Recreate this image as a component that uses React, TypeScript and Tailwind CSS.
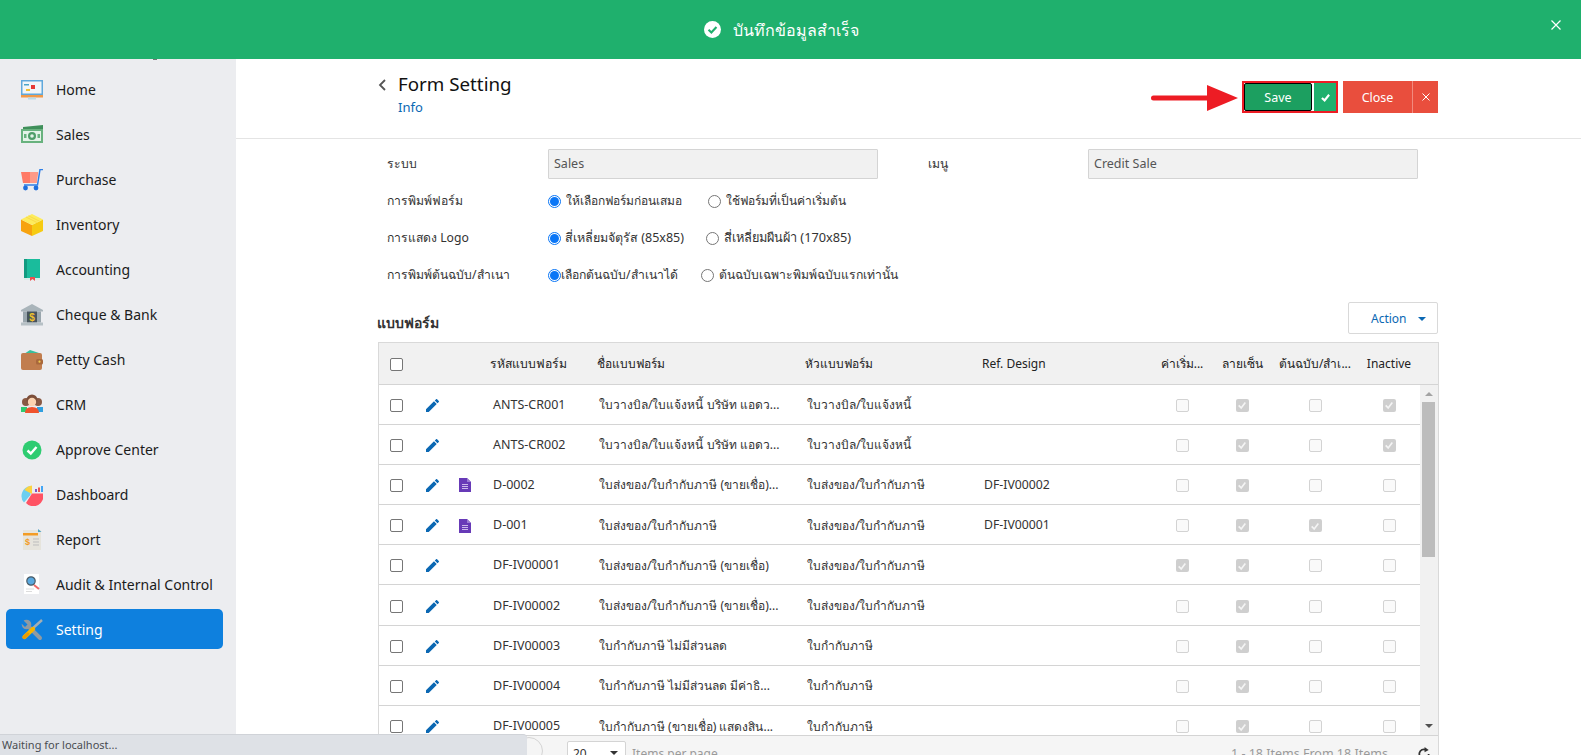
import type { ReactNode } from 'react'

const gridCols = 'grid grid-cols-[47px_33px_33px_106px_207px_177px_168px_64px_56px_90px_58px]'

const menu: { label: string; icon: ReactNode }[] = [
  {
    label: 'Home',
    icon: (
      <svg viewBox="0 0 22 22" className="h-[22px] w-[22px]">
        <rect x="0" y="1" width="22" height="15" fill="#5fa8dc" />
        <rect x="1.5" y="2.5" width="19" height="12" fill="#f1f5f8" />
        <rect x="3" y="5" width="5" height="1.5" fill="#4aa3c8" />
        <rect x="10" y="6" width="4" height="4" fill="#e53935" />
        <rect x="5" y="10" width="4" height="2" fill="#f3c02f" />
        <rect x="0" y="16" width="22" height="2.5" fill="#f09a4a" />
        <rect x="7" y="18.5" width="8" height="2" fill="#b9dbe9" />
      </svg>
    ),
  },
  {
    label: 'Sales',
    icon: (
      <svg viewBox="0 0 22 22" className="h-[22px] w-[22px]">
        <path d="M2 3 L22 1 V6 H2 Z" fill="#3f8f5a" />
        <rect x="0" y="5" width="22" height="14" fill="#68b27e" />
        <rect x="2" y="7" width="18" height="10" fill="#e4f3e8" />
        <circle cx="11" cy="12" r="4" fill="#4f9e69" />
        <circle cx="11" cy="12" r="1.8" fill="#e4f3e8" />
        <rect x="3" y="10" width="2.5" height="4" fill="#68b27e" />
        <rect x="16.5" y="10" width="2.5" height="4" fill="#68b27e" />
      </svg>
    ),
  },
  {
    label: 'Purchase',
    icon: (
      <svg viewBox="0 0 22 22" className="h-[22px] w-[22px]">
        <path d="M0 3 H17 L15.5 14 H2 Z" fill="#ff7a66" />
        <path d="M9 3 H17 L15.5 14 H9 Z" fill="#ff9a88" />
        <path d="M22 0.5 H19 L16.5 16 H3" fill="none" stroke="#2f7fe6" strokeWidth="1.5" />
        <circle cx="4.5" cy="19" r="2.4" fill="#1f6fdc" />
        <circle cx="15" cy="19" r="2.4" fill="#1f6fdc" />
      </svg>
    ),
  },
  {
    label: 'Inventory',
    icon: (
      <svg viewBox="0 0 22 22" className="h-[22px] w-[22px]">
        <path d="M0 5.5 L11 11 V22 L0 17 Z" fill="#f7a30f" />
        <path d="M22 5.5 L11 11 V22 L22 17 Z" fill="#f6cb12" />
        <path d="M0 5.5 L11 0 L22 5.5 L11 11 Z" fill="#fdec5c" />
        <path d="M5 3 L16 8.5 M7.5 1.8 L18.5 7.2" stroke="#f9d94a" strokeWidth="1" />
      </svg>
    ),
  },
  {
    label: 'Accounting',
    icon: (
      <svg viewBox="0 0 22 22" className="h-[22px] w-[22px]">
        <path d="M3 2 Q3 0 5 0 H19 V19 H3 Z" fill="#1abc9c" />
        <rect x="3" y="0" width="3" height="19" fill="#119a80" />
        <rect x="3" y="19" width="16" height="2" fill="#d9ece8" />
        <path d="M9 18 H14 V22 L11.5 20 L9 22 Z" fill="#ee4d4d" />
      </svg>
    ),
  },
  {
    label: 'Cheque & Bank',
    icon: (
      <svg viewBox="0 0 22 22" className="h-[22px] w-[22px]">
        <path d="M0 6 L11 0 L22 6 V7.5 H0 Z" fill="#a9b4ba" />
        <rect x="2" y="7.5" width="18" height="11" fill="#9aa6ad" />
        <rect x="6" y="7.5" width="10" height="11" fill="#47545c" />
        <rect x="0" y="18.5" width="22" height="3" fill="#b6c0c5" />
        <text x="11" y="16.5" textAnchor="middle" fontSize="10" fontWeight="700" fill="#efc12c" fontFamily="Liberation Sans">
          $
        </text>
      </svg>
    ),
  },
  {
    label: 'Petty Cash',
    icon: (
      <svg viewBox="0 0 22 22" className="h-[22px] w-[22px]">
        <path d="M3 5 L9 1 L18 4 V6 H3 Z" fill="#38bf9c" />
        <rect x="0" y="4" width="21" height="17" rx="2" fill="#c17d4e" />
        <rect x="15" y="10" width="7" height="5.5" rx="1.5" fill="#a9683c" />
        <circle cx="18.5" cy="12.7" r="1.1" fill="#f2c94c" />
      </svg>
    ),
  },
  {
    label: 'CRM',
    icon: (
      <svg viewBox="0 0 22 22" className="h-[22px] w-[22px]">
        <circle cx="5" cy="8" r="4" fill="#8a5a44" />
        <circle cx="17" cy="8" r="4" fill="#8a5a44" />
        <rect x="0" y="13" width="6" height="5" fill="#2ecc71" />
        <rect x="16" y="13" width="6" height="5" fill="#2f9fe0" />
        <circle cx="11" cy="6" r="5.5" fill="#7d4f3a" />
        <circle cx="11" cy="8" r="4.2" fill="#fcd3b0" />
        <path d="M4 19 Q4 13 11 13 Q18 13 18 19 Z" fill="#f0532d" />
      </svg>
    ),
  },
  {
    label: 'Approve Center',
    icon: (
      <svg viewBox="0 0 22 22" className="h-[22px] w-[22px]">
        <circle cx="11" cy="11" r="9.5" fill="#2ecc71" />
        <path d="M6.5 11.5 L9.8 14.5 L15.5 8" fill="none" stroke="#fff" strokeWidth="2.4" />
      </svg>
    ),
  },
  {
    label: 'Dashboard',
    icon: (
      <svg viewBox="0 0 22 22" className="h-[22px] w-[22px]">
        <path d="M9.5 2 A10 10 0 0 0 3 18.5 L9.5 11 Z" fill="#6ccff0" />
        <path d="M11 1.5 V10 L3.5 6 A9.5 9.5 0 0 1 11 1.5 Z" fill="#fbd341" />
        <path d="M11 9.5 H22 A10 10 0 0 1 5 19 Z" fill="#ff5364" />
        <rect x="14" y="5" width="2" height="3" fill="#7e57c2" />
        <rect x="17" y="3.5" width="2" height="4.5" fill="#ef5350" />
        <rect x="20" y="2" width="2" height="6" fill="#42a5f5" />
      </svg>
    ),
  },
  {
    label: 'Report',
    icon: (
      <svg viewBox="0 0 22 22" className="h-[22px] w-[22px]">
        <rect x="2" y="1" width="18" height="20" fill="#e6e4dc" />
        <rect x="2" y="4" width="15" height="2.5" fill="#f39c24" />
        <path d="M17 0 L20.5 3 H17 Z" fill="#4aa3c8" />
        <text x="6.5" y="16" textAnchor="middle" fontSize="9" fontWeight="700" fill="#f39c24" fontFamily="Liberation Sans">
          $
        </text>
        <path d="M12 10 H18 M12 13 H18 M12 16 H18" stroke="#bdbdbd" strokeWidth="1" />
      </svg>
    ),
  },
  {
    label: 'Audit & Internal Control',
    icon: (
      <svg viewBox="0 0 22 22" className="h-[22px] w-[22px]">
        <rect x="3" y="0" width="15" height="20" fill="#fff" />
        <path d="M5 15 H13 M5 17.5 H11" stroke="#dcdcdc" strokeWidth="1" />
        <path d="M13 11 L18 15" stroke="#ef6a6a" strokeWidth="2" />
        <circle cx="10" cy="7" r="4.2" fill="#5aa9e0" stroke="#4b5b66" strokeWidth="1.2" />
      </svg>
    ),
  },
  {
    label: 'Setting',
    icon: (
      <svg viewBox="0 0 22 22" className="h-[22px] w-[22px]">
        <path d="M6 6 L19 19" stroke="#8f9aa1" strokeWidth="4" strokeLinecap="round" />
        <circle cx="5.5" cy="5.5" r="4.8" fill="#8f9aa1" />
        <path d="M1 0 L6.5 5.5 L4 8 L-1 3 Z" fill="#0e80de" />
        <path d="M11 10 L21 1" stroke="#a3aeb4" strokeWidth="2.4" />
        <path d="M3.5 18 L12 10" stroke="#f5b400" strokeWidth="4.4" strokeLinecap="round" />
        <path d="M3 18.5 L7 15" stroke="#e89b00" strokeWidth="3" strokeLinecap="round" />
      </svg>
    ),
  },
]

const rows = [
  { code: 'ANTS-CR001', name: 'ใบวางบิล/ใบแจ้งหนี้ บริษัท แอดว...', head: 'ใบวางบิล/ใบแจ้งหนี้', ref: '', doc: false, on: [false, true, false, true] },
  { code: 'ANTS-CR002', name: 'ใบวางบิล/ใบแจ้งหนี้ บริษัท แอดว...', head: 'ใบวางบิล/ใบแจ้งหนี้', ref: '', doc: false, on: [false, true, false, true] },
  { code: 'D-0002', name: 'ใบส่งของ/ใบกำกับภาษี (ขายเชื่อ)...', head: 'ใบส่งของ/ใบกำกับภาษี', ref: 'DF-IV00002', doc: true, on: [false, true, false, false] },
  { code: 'D-001', name: 'ใบส่งของ/ใบกำกับภาษี', head: 'ใบส่งของ/ใบกำกับภาษี', ref: 'DF-IV00001', doc: true, on: [false, true, true, false] },
  { code: 'DF-IV00001', name: 'ใบส่งของ/ใบกำกับภาษี (ขายเชื่อ)', head: 'ใบส่งของ/ใบกำกับภาษี', ref: '', doc: false, on: [true, true, false, false] },
  { code: 'DF-IV00002', name: 'ใบส่งของ/ใบกำกับภาษี (ขายเชื่อ)...', head: 'ใบส่งของ/ใบกำกับภาษี', ref: '', doc: false, on: [false, true, false, false] },
  { code: 'DF-IV00003', name: 'ใบกำกับภาษี ไม่มีส่วนลด', head: 'ใบกำกับภาษี', ref: '', doc: false, on: [false, true, false, false] },
  { code: 'DF-IV00004', name: 'ใบกำกับภาษี ไม่มีส่วนลด มีค่าธิ...', head: 'ใบกำกับภาษี', ref: '', doc: false, on: [false, true, false, false] },
  { code: 'DF-IV00005', name: 'ใบกำกับภาษี (ขายเชื่อ) แสดงสิน...', head: 'ใบกำกับภาษี', ref: '', doc: false, on: [false, true, false, false] },
]

function Radio({ on }: { on?: boolean }) {
  return (
    <span
      className={`flex h-[13px] w-[13px] shrink-0 items-center justify-center rounded-full border ${
        on ? 'border-[#0a76f6]' : 'border-[#767676]'
      } bg-white`}
    >
      {on && <span className="h-[9px] w-[9px] rounded-full bg-[#0a76f6]" />}
    </span>
  )
}

function Check() {
  return <span className="block h-[13px] w-[13px] rounded-[2px] border border-[#767676] bg-white" />
}

function Locked({ on }: { on: boolean }) {
  if (!on) return <span className="block h-[13px] w-[13px] rounded-[2px] border border-[#d3d3d3] bg-[#fafafa]" />
  return (
    <span className="flex h-[13px] w-[13px] items-center justify-center rounded-[2px] bg-[#cfcfcf]">
      <svg viewBox="0 0 12 12" className="h-[10px] w-[10px]">
        <path d="M2 6.5 L5 9.5 L10 3" fill="none" stroke="#f4f4f4" strokeWidth="2" />
      </svg>
    </span>
  )
}

function Pencil() {
  return (
    <svg viewBox="3 3 18 18" className="h-[13px] w-[13px]" fill="#0b68b3">
      <path d="M3 17.25V21h3.75L17.81 9.94l-3.75-3.75L3 17.25zM20.71 7.04c.39-.39.39-1.02 0-1.41l-2.34-2.34c-.39-.39-1.02-.39-1.41 0l-1.83 1.83 3.75 3.75 1.83-1.83z" />
    </svg>
  )
}

function DocIcon() {
  return (
    <svg viewBox="0 0 12 14" className="h-[14px] w-[12px]">
      <path d="M0 0 H8 L12 4 V14 H0 Z" fill="#673ab7" />
      <path d="M8 0 L12 4 H8 Z" fill="#9b7bd4" />
      <path d="M3 6.5 H9 M3 8.5 H9 M3 10.5 H9" stroke="#cbb9ea" strokeWidth="1" />
    </svg>
  )
}

export default function App() {
  return (
    <div className="relative h-[755px] w-[1581px] overflow-hidden bg-white font-['Noto_Sans','DejaVu_Sans',sans-serif] text-[12.5px] text-[#333]">
      {/* Success banner */}
      <div className="absolute inset-x-0 top-0 z-20 flex h-[59px] items-center justify-center bg-[#1fb06d] text-white">
        <div className="flex items-center gap-[12px] pr-[19px]">
          <svg viewBox="0 0 18 18" className="h-[17px] w-[17px]">
            <circle cx="9" cy="9" r="9" fill="#fff" />
            <path d="M4.8 9.3 L7.8 12.2 L13.2 6.3" fill="none" stroke="#1fb06d" strokeWidth="2.2" />
          </svg>
          <span className="text-[16px]">บันทึกข้อมูลสำเร็จ</span>
        </div>
        <svg viewBox="0 0 10 10" className="absolute right-[20px] top-[20px] h-[10px] w-[10px]">
          <path d="M0.5 0.5 L9.5 9.5 M9.5 0.5 L0.5 9.5" stroke="#fff" strokeWidth="1.2" />
        </svg>
      </div>

      {/* Sidebar */}
      <aside className="absolute inset-y-0 left-0 w-[236px] bg-[#ecedf0] pt-[67px]">
        <div className="absolute left-[153px] top-[59px] h-[1px] w-[4px] bg-[#777]" />
        {menu.map((m) => (
          <div key={m.label} className="flex h-[45px] items-center pl-[6px]">
            <div
              className={`flex h-[40px] w-[217px] items-center gap-[13px] rounded-[5px] pl-[15px] text-[14px] ${
                m.label === 'Setting' ? '-translate-y-[1px] bg-[#0e80de] pt-[2px] text-white' : 'text-[#1b1b1b]'
              }`}
            >
              {m.icon}
              <span>{m.label}</span>
            </div>
          </div>
        ))}
      </aside>

      {/* Header */}
      <div className="absolute left-[236px] right-0 top-[59px] h-[80px] border-b border-[#e4e4e4]">
        <svg viewBox="0 0 8 12" className="absolute left-[142px] top-[20px] h-[12px] w-[8px]">
          <path d="M7 1 L2 6 L7 11" fill="none" stroke="#555" strokeWidth="1.8" />
        </svg>
        <div className="absolute left-[162px] top-[11px] text-[18.75px] leading-[28px] text-[#111]">Form Setting</div>
        <div className="absolute left-[162px] top-[38px] text-[13px] leading-[20px] text-[#0b68b3]">Info</div>

        {/* Arrow */}
        <svg viewBox="0 0 88 26" className="absolute left-[915px] top-[26px] h-[26px] w-[88px]">
          <path d="M2.5 10.5 H56 V0 L87 13 L56 26 V15.5 H2.5 A2.5 2.5 0 0 1 2.5 10.5 Z" fill="#ed1c24" />
        </svg>

        {/* Save with red marker */}
        <div className="absolute left-[1006px] top-[22px] flex h-[32px] w-[96px] border-2 border-[#ed1c24]">
          <button className="h-full w-[68px] rounded-[2px] border border-black bg-[#1c9f60] pt-[2px] text-[12.5px] text-white">Save</button>
          <span className="ml-[1px] flex h-full flex-1 items-center justify-center border-l border-white bg-[#1fb06d]">
            <svg viewBox="0 0 10 10" className="h-[9px] w-[9px]">
              <path d="M1 5.5 L4 8.2 L9 2" fill="none" stroke="#fff" strokeWidth="2.4" />
            </svg>
          </span>
        </div>
        <div className="absolute left-[1107px] top-[22px] flex h-[32px] w-[95px] bg-[#e94e3d] text-white">
          <button className="w-[70px] border-r border-[#f28a7e] pt-[2px] text-[12.5px]">Close</button>
          <span className="flex flex-1 items-center justify-center">
            <svg viewBox="0 0 8 8" className="h-[8px] w-[8px]">
              <path d="M0.5 0.5 L7.5 7.5 M7.5 0.5 L0.5 7.5" stroke="#fff" strokeWidth="1" />
            </svg>
          </span>
        </div>
      </div>

      {/* Form fields */}
      <div className="absolute left-[387px] top-[149px] w-[1031px] text-[12.2px]">
        <div className="flex h-[30px] items-center">
          <span className="w-[161px]">ระบบ</span>
          <div className="flex h-[30px] w-[330px] items-center rounded-[1px] border border-[#d4d4d4] bg-[#f1f1f1] pl-[5px] text-[12.5px] text-[#555]">Sales</div>
          <span className="ml-[50px] w-[160px]">เมนู</span>
          <div className="flex h-[30px] w-[330px] items-center rounded-[1px] border border-[#d4d4d4] bg-[#f1f1f1] pl-[5px] text-[12.5px] text-[#555]">Credit Sale</div>
        </div>
        <div className="absolute left-[0px] top-[43px] flex h-[18px] items-center">
          <span className="w-[161px]">การพิมพ์ฟอร์ม</span>
          <Radio on />
          <span className="ml-[5px] w-[142px] text-[12px]">ให้เลือกฟอร์มก่อนเสมอ</span>
          <Radio />
          <span className="ml-[5px] text-[12px]">ใช้ฟอร์มที่เป็นค่าเริ่มต้น</span>
        </div>
        <div className="absolute left-[0px] top-[80px] flex h-[18px] items-center">
          <span className="w-[161px]">การแสดง Logo</span>
          <Radio on />
          <span className="ml-[4px] w-[141px] text-[12.5px]">สี่เหลี่ยมจัตุรัส (85x85)</span>
          <Radio />
          <span className="ml-[5px] text-[12.75px]">สี่เหลี่ยมผืนผ้า (170x85)</span>
        </div>
        <div className="absolute left-[0px] top-[117px] flex h-[18px] items-center">
          <span className="w-[161px]">การพิมพ์ต้นฉบับ/สำเนา</span>
          <Radio on />
          <span className="w-[140px]">เลือกต้นฉบับ/สำเนาได้</span>
          <Radio />
          <span className="ml-[5px]">ต้นฉบับเฉพาะพิมพ์ฉบับแรกเท่านั้น</span>
        </div>
      </div>

      {/* Table title and action */}
      <div className="absolute left-[377px] top-[313px] text-[14px] font-bold leading-[20px] text-[#333]">แบบฟอร์ม</div>
      <div className="absolute left-[1348px] top-[302px] flex h-[32px] w-[90px] items-center rounded-[2px] border border-[#d9d9d9] bg-white pl-[22px] pt-[2px] text-[12px] text-[#0b68b3]">
        Action
        <svg viewBox="0 0 8 4" className="ml-[11px] h-[4px] w-[8px]">
          <path d="M0 0 H8 L4 4 Z" fill="#0b68b3" />
        </svg>
      </div>

      {/* Table */}
      <div className="absolute left-[378px] top-[342px] h-[420px] w-[1061px] border border-[#d9d9d9] text-[12px]">
        <div className={`${gridCols} h-[41.5px] items-center border-b border-[#d4d4d4] bg-[#f1f1f1] pt-[2px] text-[#222]`}>
          <span className="pl-[11px]">
            <Check />
          </span>
          <span />
          <span />
          <span className="-ml-[2px] text-[12.2px]">รหัสแบบฟอร์ม</span>
          <span className="-ml-[1px]">ชื่อแบบฟอร์ม</span>
          <span>หัวแบบฟอร์ม</span>
          <span>Ref. Design</span>
          <span className="text-center">ค่าเริ่ม...</span>
          <span className="text-center">ลายเซ็น</span>
          <span className="text-center">ต้นฉบับ/สำเ...</span>
          <span className="text-center">Inactive</span>
        </div>

        <div className="relative h-[350px] overflow-hidden">
          {rows.map((r) => (
            <div key={r.code} className={`${gridCols} h-[40.2px] w-[1041px] items-center border-b border-[#d4d4d4] pt-[2px]`}>
              <span className="pl-[11px]">
                <Check />
              </span>
              <span>
                <Pencil />
              </span>
              <span>{r.doc && <DocIcon />}</span>
              <span className="pl-[1px] text-[12.5px]">{r.code}</span>
              <span className="pl-[1px]">{r.name}</span>
              <span className="pl-[2px]">{r.head}</span>
              <span className="pl-[2px] text-[12.25px]">{r.ref}</span>
              {r.on.map((on, i) => (
                <span key={i} className="flex justify-center">
                  <Locked on={on} />
                </span>
              ))}
            </div>
          ))}

          {/* Scrollbar */}
          <div className="absolute right-0 top-0 h-full w-[18px] bg-[#f1f1f1]">
            <svg viewBox="0 0 8 4" className="absolute left-[5px] top-[7px] h-[4px] w-[8px]">
              <path d="M0 4 H8 L4 0 Z" fill="#a3a3a3" />
            </svg>
            <div className="absolute left-[2px] top-[17px] h-[155px] w-[13px] bg-[#bcbcbc]" />
            <svg viewBox="0 0 8 4" className="absolute bottom-[7px] left-[5px] h-[4px] w-[8px]">
              <path d="M0 0 H8 L4 4 Z" fill="#505050" />
            </svg>
          </div>
        </div>

        {/* Pager */}
        <div className="relative h-[30px] border-t border-[#d4d4d4] bg-[#f5f5f5] text-[#9a9a9a]">
          <span className="absolute left-[136px] top-[1px] h-[28px] w-[28px] rounded-full border border-[#d4d4d4]" />
          <span className="absolute left-[188px] top-[5px] flex h-[26px] w-[59px] rounded-[2px] border border-[#d4d4d4] bg-white pl-[5px] pt-[3px] text-[#333]">
            20
            <svg viewBox="0 0 8 4" className="absolute left-[42px] top-[9px] h-[4px] w-[8px]">
              <path d="M0 0 H8 L4 4 Z" fill="#333" />
            </svg>
          </span>
          <span className="absolute left-[253px] top-[9px]">Items per page</span>
          <span className="absolute left-[852px] top-[9px] text-[12.5px]">1 - 18 Items From 18 Items</span>
          <svg viewBox="0 0 24 24" className="absolute left-[1038px] top-[11px] h-[14px] w-[14px]">
            <path d="M20 12 A8 8 0 1 1 15 4.6" fill="none" stroke="#333" strokeWidth="3" />
            <path d="M13 0 L20 5 L13 9 Z" fill="#333" />
          </svg>
        </div>
      </div>

      {/* Browser status bubble */}
      <div className="absolute bottom-0 left-0 z-30 flex h-[21px] w-[527px] items-center rounded-tr-[4px] border-t border-[#d0d3d8] bg-[#dee1e6] pl-[2px] pt-[1px] text-[11px] text-[#4a4d52]">
        Waiting for localhost...
      </div>
    </div>
  )
}
